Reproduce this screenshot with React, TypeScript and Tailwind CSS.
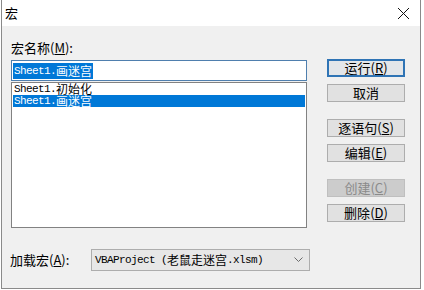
import React from "react";

const cjk = { fontFamily: '"Noto Sans CJK SC", "Noto Sans", sans-serif' };

function Mixed({ text, cjkClass = "text-[12px] leading-[12px]" }: { text: string; cjkClass?: string }) {
  const parts: { s: string; a: boolean }[] = [];
  for (const ch of text) {
    const a = ch.charCodeAt(0) < 128;
    const last = parts[parts.length - 1];
    if (last && last.a === a) last.s += ch;
    else parts.push({ s: ch, a });
  }
  return (
    <>
      {parts.map((p, i) =>
        p.a ? (
          <span
            key={i}
            className="text-[11px] leading-[12px] tracking-[-0.6px] whitespace-pre"
            style={{ fontFamily: '"Liberation Mono", monospace' }}
          >
            {p.s}
          </span>
        ) : (
          <span key={i} className={cjkClass} style={cjk}>
            {p.s}
          </span>
        )
      )}
    </>
  );
}

function Btn({
  label,
  k,
  variant = "normal",
}: {
  label: string;
  k?: string;
  variant?: "normal" | "default" | "disabled";
}) {
  const cls =
    variant === "default"
      ? "border-2 border-[#2f74b5] bg-[#e3e6e9] text-black"
      : variant === "disabled"
      ? "border border-[#bfbfbf] bg-[#cccccc] text-[#8a8a8a]"
      : "border border-[#adadad] bg-[#e1e1e1] text-black";
  return (
    <div
      className={`h-[18px] w-[78px] flex items-center justify-center text-[13px] leading-[16px] ${cls}`}
      style={cjk}
    >
      <span>{label}</span>
      {k && (
        <span>
          (<span className="underline underline-offset-1">{k}</span>)
        </span>
      )}
    </div>
  );
}

export default function App() {
  return (
    <div className="w-[424px] h-[290px] bg-white overflow-hidden">
      <div className="ml-[1px] w-[420px] h-[289px] border-l border-r border-b border-[#8a8a8a] flex flex-col">
        {/* title bar */}
        <div className="h-[26px] bg-white flex items-center justify-between pl-[3px] pr-[10px]">
          <span className="text-[13px] leading-[16px] text-black" style={cjk}>
            宏
          </span>
          <svg width="13" height="13" viewBox="0 0 13 13">
            <path d="M1 1 L12 12 M12 1 L1 12" stroke="#111" strokeWidth="1" fill="none" />
          </svg>
        </div>
        {/* content */}
        <div className="flex-1 bg-[#f0f0f0] flex flex-col">
          <div className="flex pl-[9px]">
            {/* left column */}
            <div className="w-[296px] flex flex-col pt-[14px]">
              <div className="h-[16px] leading-[16px] text-[13px] text-black" style={cjk}>
                宏名称(<span className="underline underline-offset-1">M</span>):
              </div>
              <div className="mt-[4px] h-[21px] border border-[#4f7fae] bg-white flex items-center pl-[1px]">
                <div className="h-[16px] bg-[#0078d7] text-white flex items-center px-[1px]">
                  <Mixed text="Sheet1.画迷宫" />
                </div>
              </div>
              <div className="mt-[1px] h-[146px] border border-[#828282] bg-white flex flex-col px-[1px]">
                <div className="h-[12px] flex items-center pl-[1px] text-black">
                  <Mixed text="Sheet1.初始化" />
                </div>
                <div className="h-[12px] flex items-center pl-[1px] bg-[#0078d7] text-white">
                  <Mixed text="Sheet1.画迷宫" />
                </div>
              </div>
            </div>
            {/* right column */}
            <div className="ml-[20px] w-[78px] flex flex-col pt-[33px]">
              <Btn label="运行" k="R" variant="default" />
              <div className="mt-[7px]">
                <Btn label="取消" />
              </div>
              <div className="mt-[17px]">
                <Btn label="逐语句" k="S" />
              </div>
              <div className="mt-[7px]">
                <Btn label="编辑" k="E" />
              </div>
              <div className="mt-[17px]">
                <Btn label="创建" k="C" variant="disabled" />
              </div>
              <div className="mt-[7px]">
                <Btn label="删除" k="D" />
              </div>
            </div>
          </div>
          {/* bottom row */}
          <div className="mt-[21px] flex items-center pl-[8px] h-[22px]">
            <div className="w-[81px] text-[13px] leading-[16px] text-black" style={cjk}>
              加载宏(<span className="underline underline-offset-1">A</span>):
            </div>
            <div className="w-[219px] h-[22px] border border-[#adadad] bg-[#e7e7e7] flex items-center justify-between pl-[3px] pr-[6px] text-black">
              <div className="flex items-center">
                <Mixed text="VBAProject (老鼠走迷宫.xlsm)" />
              </div>
              <svg width="9" height="6" viewBox="0 0 9 6">
                <path d="M0.5 0.5 L4.5 4.5 L8.5 0.5" stroke="#6b6b6b" strokeWidth="1" fill="none" />
              </svg>
            </div>
          </div>
        </div>
      </div>
    </div>
  );
}
